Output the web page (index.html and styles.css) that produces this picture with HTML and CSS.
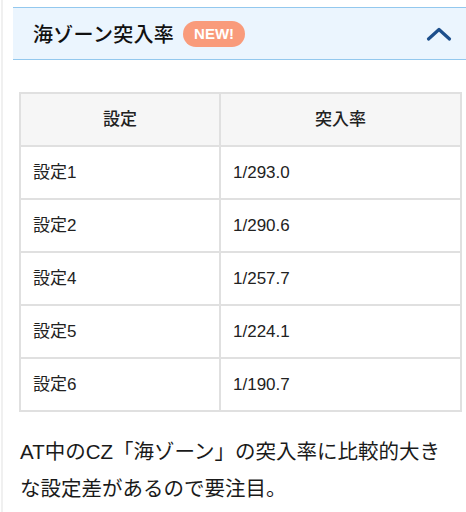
FILE: index.html
```html
<!DOCTYPE html>
<html lang="ja">
<head>
<meta charset="utf-8">
<link rel="stylesheet" href="styles.css">
</head>
<body>
<div class="page">
  <div class="acc-head">
    <h2 class="acc-title">海ゾーン突入率</h2>
    <span class="badge">NEW!</span>
    <svg class="chev" width="26" height="16" viewBox="0 0 26 16"><path d="M2.5 13 L13 3.5 L23.5 13" fill="none" stroke="#1d4f8c" stroke-width="3.2" stroke-linecap="round" stroke-linejoin="round"/></svg>
  </div>
  <div class="acc-body">
    <table class="rate">
      <thead>
        <tr><th>設定</th><th>突入率</th></tr>
      </thead>
      <tbody>
        <tr><td>設定1</td><td>1/293.0</td></tr>
        <tr><td>設定2</td><td>1/290.6</td></tr>
        <tr><td>設定4</td><td>1/257.7</td></tr>
        <tr><td>設定5</td><td>1/224.1</td></tr>
        <tr><td>設定6</td><td>1/190.7</td></tr>
      </tbody>
    </table>
    <p class="note">AT中のCZ「海ゾーン」の突入率に比較的大きな設定差があるので要注目。</p>
  </div>
</div>
</body>
</html>
```
FILE: styles.css
```css
html, body {
  margin: 0;
  padding: 0;
  background: #fff;
}
body {
  font-family: "Liberation Sans", "Noto Sans CJK JP", sans-serif;
  color: #222;
}
.page {
  margin-left: 1px;
  border-left: 2px solid #f0f0f0;
  min-height: 512px;
  padding-top: 7px;
}
.acc-head {
  margin-left: 10px;
  height: 51px;
  border-top: 1px solid #93c8ee;
  border-bottom: 1px solid #93c8ee;
  background: #ebf5fe;
  display: flex;
  align-items: center;
  padding-left: 20px;
  padding-right: 14px;
}
.acc-title {
  margin: 0;
  font-size: 20px;
  font-weight: 500;
  color: #111;
  letter-spacing: 0.3px;
}
.badge {
  margin-left: 9px;
  background: #f99b7b;
  color: #fff;
  font-family: "Liberation Sans", sans-serif;
  font-weight: 700;
  font-size: 15px;
  height: 26px;
  line-height: 26px;
  padding: 0 11px;
  border-radius: 13px;
}
.chev {
  margin-left: auto;
  margin-top: 1px;
}
.acc-body {
  padding: 32px 4px 0 16px;
}
.rate {
  width: 443px;
  border-collapse: collapse;
  font-size: 17px;
  line-height: 20px;
  color: #222;
}
.rate th, .rate td {
  border: 2.5px solid #e0e0e0;
  height: 51px;
  padding: 0 12px;
  vertical-align: middle;
}
.rate th {
  background: #f6f6f6;
  font-weight: 500;
  text-align: center;
}
.rate td {
  text-align: left;
}
.rate th:first-child, .rate td:first-child {
  width: 174px;
}
.note {
  max-width: 432px;
  margin: 21px 0 0 1px;
  font-size: 20.5px;
  line-height: 37px;
  color: #1a1a1a;
}
```
